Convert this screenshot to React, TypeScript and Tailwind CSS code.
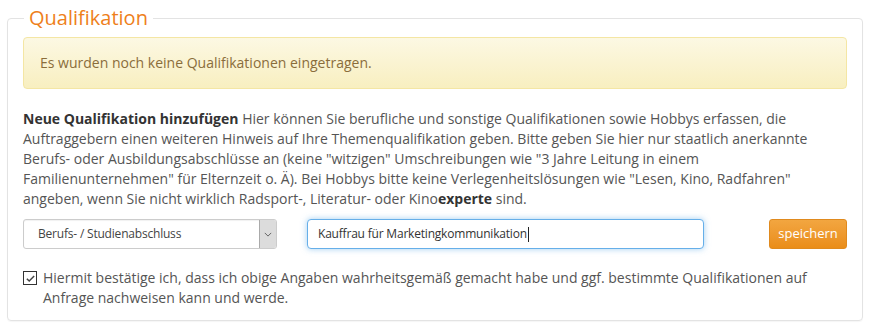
const Checkmark = () => (
  <span className="mt-[3px] flex h-[14px] w-[14px] shrink-0 items-center justify-center border border-[#333] bg-white">
    <svg viewBox="0 0 12 12" className="h-[11px] w-[11px]" fill="none" stroke="#444" strokeWidth="1.6">
      <path d="M2 6.2l2.6 2.6L10 3.2" />
    </svg>
  </span>
);

const App = () => {
  return (
    <div className="h-[329px] w-[871px] bg-white pt-[4px] font-['Open_Sans']">
      <fieldset className="mx-[7px] w-[855px] rounded-[4px] border border-[#e3e3e3] px-[15px] pb-[12px] shadow-[0_1px_1px_rgba(0,0,0,0.04)]">
        <legend className="ml-[1px] px-[5px] text-[20px] leading-[28px] text-[#ee7f1b]">
          Qualifikation
        </legend>

        <div className="mt-[5px] rounded-[4px] border border-[#f4e6a4] bg-gradient-to-b from-[#fcf8e3] to-[#f8efc0] px-[16px] py-[15px] text-[14px] leading-[20px] text-[#8a6d3b]">
          Es wurden noch keine Qualifikationen eingetragen.
        </div>

        <p className="mt-[20px] text-[14px] leading-[20px] text-[#555]">
          <b className="font-bold text-[#333]">Neue Qualifikation hinzufügen</b> Hier können Sie
          berufliche und sonstige Qualifikationen sowie Hobbys erfassen, die Auftraggebern einen
          weiteren Hinweis auf Ihre Themenqualifikation geben. Bitte geben Sie hier nur staatlich
          anerkannte Berufs- oder Ausbildungsabschlüsse an (keine "witzigen" Umschreibungen wie "3
          Jahre Leitung in einem Familienunternehmen" für Elternzeit o. Ä). Bei Hobbys bitte keine
          Verlegenheitslösungen wie "Lesen, Kino, Radfahren" angeben, wenn Sie nicht wirklich
          Radsport-, Literatur- oder Kino<b className="font-bold text-[#333]">experte</b> sind.
        </p>

        <div className="mt-[10px] flex items-center">
          <div className="flex h-[30px] w-[254px] items-stretch overflow-hidden rounded-[3px] border border-[#ccc] bg-white shadow-[inset_0_1px_1px_rgba(0,0,0,0.06)]">
            <span className="flex flex-1 items-center pl-[14px] text-[12px] tracking-[-0.2px] text-[#444]">
              Berufs- / Studienabschluss
            </span>
            <span className="flex w-[17px] items-center justify-center border-l border-[#aaa] bg-[#dcdcdc]">
              <svg viewBox="0 0 10 6" className="h-[5px] w-[8px]" fill="none" stroke="#555" strokeWidth="1.1">
                <path d="M1 1l4 4 4-4" />
              </svg>
            </span>
          </div>

          <div className="ml-[30px] flex h-[30px] w-[397px] items-center rounded-[4px] border border-[#66afe9] bg-white pl-[10px] text-[12px] tracking-[-0.2px] text-[#333] shadow-[0_0_6px_rgba(102,175,233,0.6)]">
            Kauffrau für Marketingkommunikation
            <span className="ml-[1px] h-[15px] w-px bg-[#222]" />
          </div>

          <button className="ml-[65px] h-[30px] w-[78px] rounded-[3px] border border-[#e08a1e] bg-gradient-to-b from-[#f2a640] to-[#ea8d17] text-[13px] text-white">
            speichern
          </button>
        </div>

        <label className="mt-[19px] flex gap-[6px] text-[14px] leading-[20px] text-[#555]">
          <Checkmark />
          <span>
            Hiermit bestätige ich, dass ich obige Angaben wahrheitsgemäß gemacht habe und ggf.
            bestimmte Qualifikationen auf Anfrage nachweisen kann und werde.
          </span>
        </label>
      </fieldset>
    </div>
  );
};

export default App;
